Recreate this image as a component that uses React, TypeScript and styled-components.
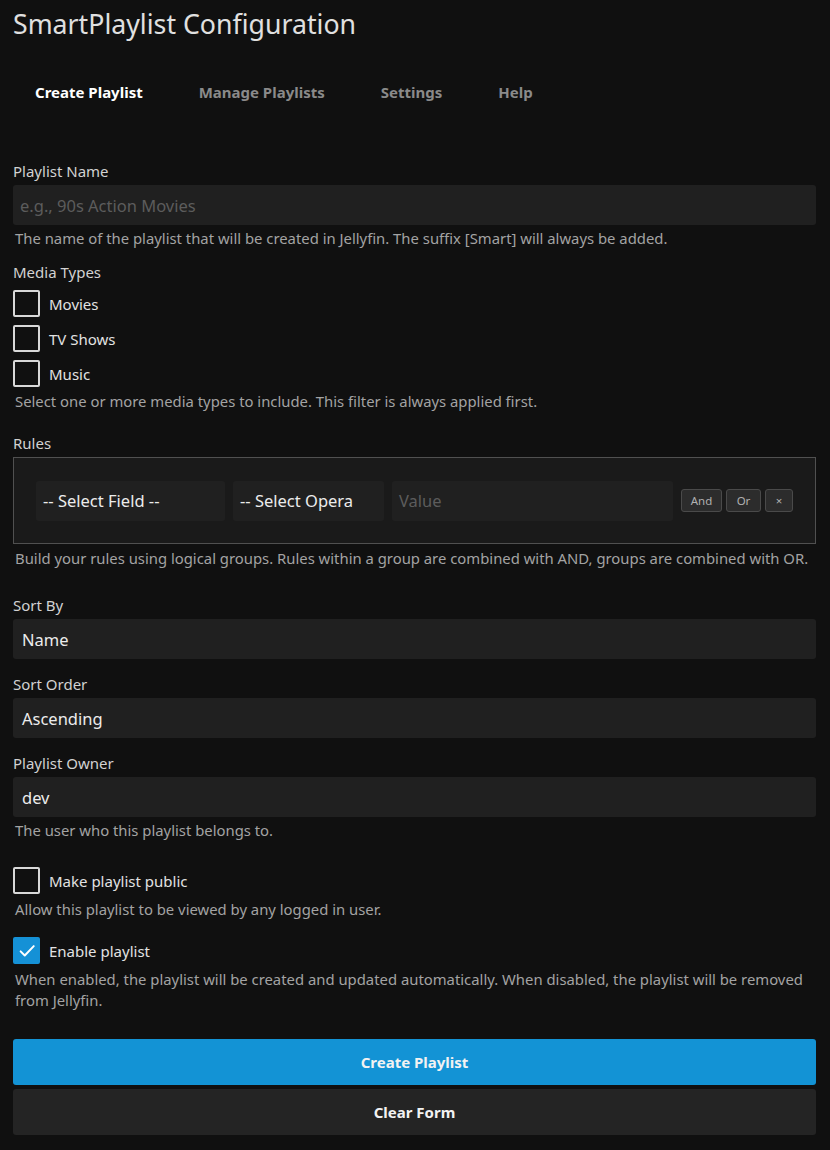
import React from 'react'
import styled, { createGlobalStyle } from 'styled-components'

const GlobalStyle = createGlobalStyle`
  html, body {
    margin: 0;
    padding: 0;
    background: #101010;
  }
  body {
    font-family: "Noto Sans", "Open Sans", sans-serif;
    color: #e6e6e6;
  }
  * { box-sizing: border-box; }
`

const Page = styled.div`
  padding: 0 14px 0 13px;
  min-height: 1150px;
`

const Title = styled.h1`
  margin: 0;
  padding-top: 6px;
  font-size: 26.7px;
  font-weight: 400;
  line-height: 36px;
  color: #e0e0e0;
`

const Tabs = styled.nav`
  display: flex;
  gap: 56px;
  padding-left: 22px;
  margin-top: 34px;
  height: 32px;
  align-items: center;
`

const Tab = styled.div<{ $active?: boolean }>`
  font-size: 15px;
  font-weight: 700;
  color: ${p => (p.$active ? '#ffffff' : '#8a8a8a')};
`

const Form = styled.form`
  display: flex;
  flex-direction: column;
  margin-top: 53px;
`

const Field = styled.div<{ $gap?: number }>`
  display: flex;
  flex-direction: column;
  margin-bottom: ${p => p.$gap ?? 15}px;
`

const Label = styled.label<{ $mb?: number }>`
  font-size: 15px;
  line-height: 20px;
  color: #d2d2d2;
  margin-bottom: ${p => p.$mb ?? 4}px;
`

const Input = styled.div<{ $placeholder?: boolean }>`
  height: 40px;
  border-radius: 3px;
  background: #202020;
  display: flex;
  align-items: center;
  padding: 0 9px 0 ${p => (p.$placeholder ? 7 : 9)}px;
  font-size: 16.5px;
  color: ${p => (p.$placeholder ? '#5c5c5c' : '#ececec')};
  white-space: nowrap;
  overflow: hidden;
`

const Help = styled.div<{ $mt?: number }>`
  font-size: 14.85px;
  line-height: 21px;
  color: #a3a3a3;
  padding-left: 2px;
  margin-top: ${p => p.$mt ?? 4}px;
`

const CheckList = styled.div`
  display: flex;
  flex-direction: column;
  gap: 8px;
`

const CheckRow = styled.div`
  display: flex;
  align-items: center;
  gap: 9px;
  height: 27px;
`

const Box = styled.span<{ $checked?: boolean }>`
  width: 27px;
  height: 27px;
  border-radius: 2px;
  border: 2px solid ${p => (p.$checked ? '#1591d6' : '#d8d8d8')};
  background: ${p => (p.$checked ? '#1591d6' : 'transparent')};
  display: flex;
  align-items: center;
  justify-content: center;
  flex-shrink: 0;
`

const CheckLabel = styled.span`
  font-size: 15px;
  color: #e2e2e2;
`

const RulesBox = styled.div`
  border: 1px solid #505050;
  background: #1a1a1a;
  height: 87px;
  display: flex;
  align-items: center;
  padding: 0 22px;
  gap: 8px;
`

const RuleInput = styled(Input)<{ $w: number }>`
  width: ${p => p.$w}px;
  flex-shrink: 0;
  padding: 0 4px 0 7px;
`

const SmallBtns = styled.div`
  display: flex;
  gap: 4px;
`

const SmallBtn = styled.button<{ $w: number }>`
  width: ${p => p.$w}px;
  height: 23px;
  border: 1px solid #4a4a4a;
  border-radius: 3px;
  background: #2c2c2c;
  color: #b0b0b0;
  font-family: inherit;
  font-size: 11.5px;
  padding: 0;
  display: flex;
  align-items: center;
  justify-content: center;
`

const Button = styled.button<{ $primary?: boolean }>`
  width: 100%;
  height: 46px;
  border: none;
  border-radius: 3px;
  background: ${p => (p.$primary ? '#1393d5' : '#242424')};
  color: #f2f2f2;
  font-family: inherit;
  font-size: 15px;
  font-weight: 700;
  margin-bottom: 4px;
`

const Check = () => (
  <svg width="18" height="18" viewBox="0 0 24 24" fill="none">
    <path d="M3.5 12.5l5.5 5.5L21 5.5" stroke="#fff" strokeWidth="2.6" strokeLinecap="round" strokeLinejoin="round" />
  </svg>
)

const CheckItem = ({ label, checked }: { label: string; checked?: boolean }) => (
  <CheckRow>
    <Box $checked={checked}>{checked && <Check />}</Box>
    <CheckLabel>{label}</CheckLabel>
  </CheckRow>
)

const App = () => {
  return (
    <Page>
      <GlobalStyle />
      <Title>SmartPlaylist Configuration</Title>
      <Tabs>
        <Tab $active>Create Playlist</Tab>
        <Tab>Manage Playlists</Tab>
        <Tab>Settings</Tab>
        <Tab>Help</Tab>
      </Tabs>

      <Form>
        <Field $gap={13}>
          <Label>Playlist Name</Label>
          <Input $placeholder>e.g., 90s Action Movies</Input>
          <Help $mt={3}>The name of the playlist that will be created in Jellyfin. The suffix [Smart] will always be added.</Help>
        </Field>

        <Field $gap={21}>
          <Label $mb={8}>Media Types</Label>
          <CheckList>
            <CheckItem label="Movies" />
            <CheckItem label="TV Shows" />
            <CheckItem label="Music" />
          </CheckList>
          <Help>Select one or more media types to include. This filter is always applied first.</Help>
        </Field>

        <Field $gap={26}>
          <Label>Rules</Label>
          <RulesBox>
            <RuleInput $w={189}>-- Select Field --</RuleInput>
            <RuleInput $w={151}>-- Select Opera</RuleInput>
            <RuleInput $w={281} $placeholder>Value</RuleInput>
            <SmallBtns>
              <SmallBtn $w={41}>And</SmallBtn>
              <SmallBtn $w={35}>Or</SmallBtn>
              <SmallBtn $w={28}>×</SmallBtn>
            </SmallBtns>
          </RulesBox>
          <Help>Build your rules using logical groups. Rules within a group are combined with AND, groups are combined with OR.</Help>
        </Field>

        <Field>
          <Label>Sort By</Label>
          <Input>Name</Input>
        </Field>

        <Field>
          <Label>Sort Order</Label>
          <Input>Ascending</Input>
        </Field>

        <Field $gap={26}>
          <Label>Playlist Owner</Label>
          <Input>dev</Input>
          <Help $mt={3}>The user who this playlist belongs to.</Help>
        </Field>

        <Field $gap={17}>
          <CheckItem label="Make playlist public" />
          <Help $mt={5}>Allow this playlist to be viewed by any logged in user.</Help>
        </Field>

        <Field $gap={28}>
          <CheckItem label="Enable playlist" checked />
          <Help $mt={5}>
            When enabled, the playlist will be created and updated automatically. When disabled, the playlist will be removed from Jellyfin.
          </Help>
        </Field>

        <Button $primary type="button">Create Playlist</Button>
        <Button type="button">Clear Form</Button>
      </Form>
    </Page>
  )
}

export default App
